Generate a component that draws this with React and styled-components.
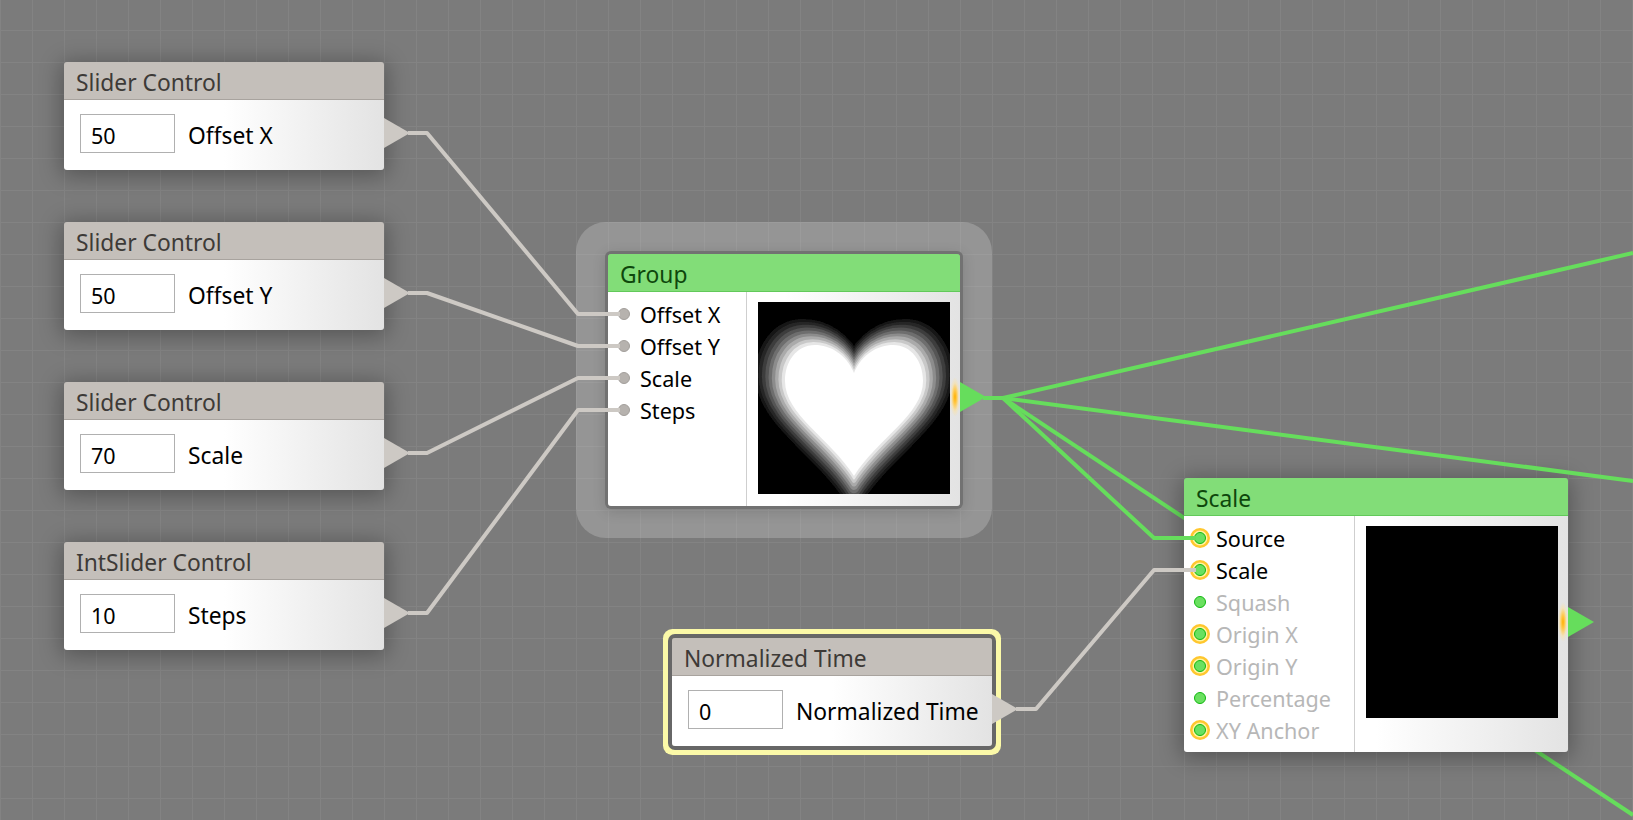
import React from "react";
import styled, { createGlobalStyle } from "styled-components";

const W = 1633;
const H = 820;
const GRAY_WIRE = "#cdc9c4";
const GREEN_WIRE = "#66dd5c";

const Global = createGlobalStyle`
  html, body { margin: 0; padding: 0; background: #7b7b7b; overflow: hidden; }
  * { box-sizing: border-box; }
`;

const Canvas = styled.div`
  position: relative;
  width: ${W}px;
  height: ${H}px;
  overflow: hidden;
  font-family: "Noto Sans", "Open Sans", sans-serif;
  background-color: #7b7b7b;
  background-image:
    linear-gradient(to right, #838383 1px, transparent 1px),
    linear-gradient(to bottom, #838383 1px, transparent 1px);
  background-size: 32px 32px;
  background-position: 0 30px;
`;

const WireLayer = styled.svg`
  position: absolute;
  left: 0;
  top: 0;
  z-index: ${(p) => (p.$front ? 3 : 0)};
  pointer-events: none;
`;

const Node = styled.div`
  position: absolute;
  left: ${(p) => p.$x}px;
  top: ${(p) => p.$y}px;
  width: ${(p) => p.$w}px;
  z-index: 1;
  border-radius: 3px;

  &::after {
    content: "";
    position: absolute;
    inset: 0;
    z-index: -1;
    border-radius: 3px;
    box-shadow: ${(p) =>
      p.$state === "active"
        ? "0 0 0 4px #676767, 0 0 0 9px #fbf9a8"
        : p.$state === "group"
        ? "0 0 0 3px #727272, 0 3px 14px 3px rgba(0,0,0,.14)"
        : "0 3px 22px 3px rgba(0,0,0,.3)"};
  }
`;

const Halo = styled.div`
  position: absolute;
  inset: -32px;
  border-radius: 30px;
  background: rgba(255, 255, 255, 0.2);
  z-index: -1;
`;

const Header = styled.div`
  height: 38px;
  padding: 3px 0 0 12px;
  display: flex;
  align-items: center;
  font-size: 22.8px;
  border-radius: 3px 3px 0 0;
  background: ${(p) => (p.$green ? "#82dd78" : "#c4bfba")};
  border-bottom: 1px solid ${(p) => (p.$green ? "#62c95a" : "#a8a39e")};
  color: ${(p) => (p.$green ? "#0e470c" : "#3d3a37")};
`;

const Body = styled.div`
  background: linear-gradient(to right, #fff 50%, #e3e3e3 100%);
  border-radius: 0 0 3px 3px;
`;

const ControlBody = styled(Body)`
  height: 70px;
  padding: 14px 16px 0;
  display: flex;
  align-items: flex-start;
  gap: 13px;
`;

const ValueInput = styled.input`
  width: 95px;
  height: 39px;
  padding: 3px 0 0 10px;
  border: 1px solid #b0b0b0;
  background: #fff;
  font: inherit;
  font-size: 21.5px;
  color: #000;
  outline: none;
  flex: none;
`;

const ControlLabel = styled.span`
  font-size: 22.8px;
  line-height: 39px;
  padding-top: 2px;
  color: #000;
  white-space: nowrap;
`;

const GraphBody = styled(Body)`
  display: flex;
`;

const PortList = styled.div`
  width: ${(p) => p.$w}px;
  flex: none;
  padding: 6px 0;
  border-right: 1px solid #cfcfcf;
`;

const PortRow = styled.div`
  height: 32px;
  display: flex;
  align-items: center;
  gap: 10px;
  font-size: 21.6px;
  padding-left: 10px;
  color: ${(p) => (p.$dim ? "#b7b7b7" : "#000")};
`;

const Dot = styled.span`
  width: 12px;
  height: 12px;
  flex: none;
  border-radius: 50%;
  background: ${(p) => (p.$green ? "#6ae060" : "#b6b2ae")};
  border: 1.5px solid ${(p) => (p.$green ? "#10b810" : "#a39f9b")};
  box-shadow: ${(p) => (p.$ring ? "0 0 0 1.5px #fff3a0, 0 0 0 4px #ffc72e" : "none")};
  position: relative;
  z-index: 4;
`;

const Preview = styled.div`
  flex: 1;
  padding: 10px 10px 12px;
  display: flex;
  justify-content: flex-end;
`;

const Thumb = styled.div`
  width: 192px;
  height: 192px;
  background: #000;
  flex: none;
`;

const Output = styled.svg`
  position: absolute;
  left: 100%;
  top: ${(p) => p.$cy - 16}px;
  z-index: 2;
`;

const Glow = styled.span`
  position: absolute;
  right: 0;
  top: ${(p) => p.$cy - 20}px;
  width: 10px;
  height: 40px;
  z-index: 2;
  background: radial-gradient(ellipse closest-side, #ffb000 0%, #ffca50 35%, rgba(255, 225, 150, 0.5) 70%, rgba(255, 235, 180, 0) 100%);
`;

const HEART =
  "M96 71 C88 52 72 43 57 43 C38 43 27 60 27 79 C27 113 72 136 96 174 C120 136 165 113 165 79 C165 60 154 43 135 43 C120 43 104 52 96 71 Z";

const HEART_STEPS = [22, 40, 60, 84, 110, 140, 170, 200, 230];

function HeartPicture() {
  const n = HEART_STEPS.length;
  return (
    <svg width="192" height="192" viewBox="0 0 192 192" style={{ display: "block" }}>
      <defs>
        <filter id="soft" x="-20%" y="-20%" width="140%" height="140%">
          <feGaussianBlur stdDeviation="0.7" />
        </filter>
        <clipPath id="frame">
          <rect width="192" height="192" />
        </clipPath>
      </defs>
      <rect width="192" height="192" fill="#000" />
      <g clipPath="url(#frame)">
        <g filter="url(#soft)">
          {HEART_STEPS.map((g, i) => {
            const k = 1 - i / n;
            const s = 1 + 0.3 * k;
            const color = `rgb(${g},${g},${g})`;
            return (
              <path
                key={g}
                d={HEART}
                fill={color}
                stroke={color}
                strokeWidth={(18 * k) / s}
                strokeLinejoin="round"
                transform={`translate(96 100) scale(${s}) translate(-96 -100)`}
              />
            );
          })}
          <path d={HEART} fill="#fff" />
        </g>
      </g>
    </svg>
  );
}

function Triangle({ color, cy }) {
  return (
    <Output $cy={cy} width="28" height="32" viewBox="0 0 28 32">
      <polygon points="0,1 26,16 0,31" fill={color} />
    </Output>
  );
}

function ControlNode({ x, y, title, value, label, active }) {
  return (
    <Node $x={x} $y={y} $w={320} $state={active ? "active" : "plain"}>
      <Header>{title}</Header>
      <ControlBody>
        <ValueInput readOnly value={value} />
        <ControlLabel>{label}</ControlLabel>
      </ControlBody>
      <Triangle color={GRAY_WIRE} cy={71} />
    </Node>
  );
}

function GraphNode({ x, y, w, listW, title, ports, halo, picture, cy }) {
  return (
    <Node $x={x} $y={y} $w={w} $state={halo ? "group" : "plain"}>
      {halo && <Halo />}
      <Header $green>{title}</Header>
      <GraphBody>
        <PortList $w={listW}>
          {ports.map((p) => (
            <PortRow key={p.name} $dim={p.dim}>
              <Dot $green={p.green} $ring={p.ring} />
              {p.name}
            </PortRow>
          ))}
        </PortList>
        <Preview>
          <Thumb>{picture}</Thumb>
        </Preview>
      </GraphBody>
      <Glow $cy={cy} />
      <Triangle color={GREEN_WIRE} cy={cy} />
    </Node>
  );
}

const controls = [
  { x: 64, y: 62, title: "Slider Control", value: "50", label: "Offset X" },
  { x: 64, y: 222, title: "Slider Control", value: "50", label: "Offset Y" },
  { x: 64, y: 382, title: "Slider Control", value: "70", label: "Scale" },
  { x: 64, y: 542, title: "IntSlider Control", value: "10", label: "Steps" },
  { x: 672, y: 638, title: "Normalized Time", value: "0", label: "Normalized Time", active: true },
];

const groupPorts = ["Offset X", "Offset Y", "Scale", "Steps"].map((name) => ({ name }));

const scalePorts = [
  { name: "Source", green: true, ring: true },
  { name: "Scale", green: true, ring: true },
  { name: "Squash", green: true, dim: true },
  { name: "Origin X", green: true, ring: true, dim: true },
  { name: "Origin Y", green: true, ring: true, dim: true },
  { name: "Percentage", green: true, dim: true },
  { name: "XY Anchor", green: true, ring: true, dim: true },
];

const frontWires = [
  { c: GRAY_WIRE, p: "408,133 427,133 578,314 620,314" },
  { c: GRAY_WIRE, p: "408,293 427,293 578,346 620,346" },
  { c: GRAY_WIRE, p: "408,453 427,453 578,378 620,378" },
  { c: GRAY_WIRE, p: "408,613 427,613 578,410 620,410" },
  { c: GRAY_WIRE, p: "1016,709 1036,709 1154,570 1196,570" },
  { c: GREEN_WIRE, p: "983,398 1003,398 1633,253" },
  { c: GREEN_WIRE, p: "1003,398 1633,481" },
  { c: GREEN_WIRE, p: "1003,398 1154,538 1196,538" },
];

export default function App() {
  return (
    <Canvas>
      <Global />
      <WireLayer width={W} height={H}>
        <polyline points="1003,398 1633,815" fill="none" stroke={GREEN_WIRE} strokeWidth="4" />
      </WireLayer>
      {controls.map((c) => (
        <ControlNode key={c.label} {...c} />
      ))}
      <GraphNode
        x={608}
        y={254}
        w={352}
        listW={139}
        title="Group"
        ports={groupPorts}
        halo
        picture={<HeartPicture />}
        cy={143}
      />
      <GraphNode x={1184} y={478} w={384} listW={171} title="Scale" ports={scalePorts} cy={144} />
      <WireLayer $front width={W} height={H}>
        {frontWires.map((w) => (
          <polyline key={w.p} points={w.p} fill="none" stroke={w.c} strokeWidth="4" strokeLinejoin="round" />
        ))}
      </WireLayer>
    </Canvas>
  );
}
